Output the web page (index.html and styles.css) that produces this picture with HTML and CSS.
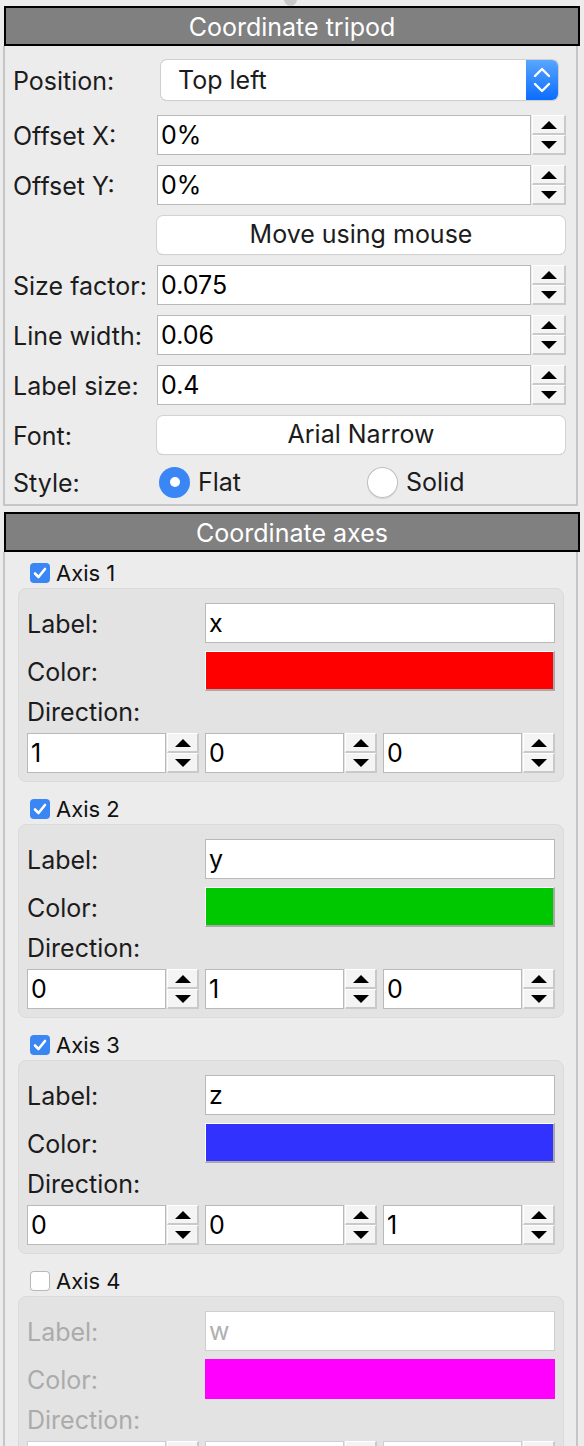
FILE: index.html
```html
<!DOCTYPE html>
<html>
<head>
<meta charset="utf-8">
<link rel="stylesheet" href="styles.css">
</head>
<body>
<div class="handle"></div>
<div class="panel">
  <div class="header">Coordinate tripod</div>
  <div class="frame tripod">
    <div class="form">
      <div class="lbl pos">Position:</div>
      <div class="combo"><span class="combo-text">Top left</span><span class="combo-btn"><svg width="20" height="30" viewBox="0 0 20 30"><polyline points="3,11 10,4 17,11" fill="none" stroke="#fff" stroke-width="2.4" stroke-linecap="round" stroke-linejoin="round"/><polyline points="3,19 10,26 17,19" fill="none" stroke="#fff" stroke-width="2.4" stroke-linecap="round" stroke-linejoin="round"/></svg></span></div>

      <div class="lbl">Offset X:</div>
      <div class="spin"><div class="inp">0%</div><div class="arrows"><div class="up"><i></i></div><div class="dn"><i></i></div></div></div>

      <div class="lbl">Offset Y:</div>
      <div class="spin"><div class="inp">0%</div><div class="arrows"><div class="up"><i></i></div><div class="dn"><i></i></div></div></div>

      <div></div>
      <div class="btn">Move using mouse</div>

      <div class="lbl">Size factor:</div>
      <div class="spin"><div class="inp">0.075</div><div class="arrows"><div class="up"><i></i></div><div class="dn"><i></i></div></div></div>

      <div class="lbl">Line width:</div>
      <div class="spin"><div class="inp">0.06</div><div class="arrows"><div class="up"><i></i></div><div class="dn"><i></i></div></div></div>

      <div class="lbl">Label size:</div>
      <div class="spin"><div class="inp">0.4</div><div class="arrows"><div class="up"><i></i></div><div class="dn"><i></i></div></div></div>

      <div class="lbl">Font:</div>
      <div class="btn">Arial Narrow</div>

      <div class="lbl">Style:</div>
      <div class="radios">
        <div class="radio-item first"><span class="radio on"></span>Flat</div>
        <div class="radio-item"><span class="radio"></span>Solid</div>
      </div>
    </div>
  </div>

  <div class="header">Coordinate axes</div>
  <div class="frame axes">
    <div class="axis">
      <div class="axis-title"><span class="check on"><svg width="14" height="12" viewBox="0 0 14 12"><polyline points="2,6.5 5.5,10 12,2" fill="none" stroke="#fff" stroke-width="2.6" stroke-linecap="round" stroke-linejoin="round"/></svg></span>Axis 1</div>
      <div class="axis-box">
        <div class="lbl">Label:</div><div class="inp wide">x</div>
        <div class="lbl">Color:</div><div class="swatch red"></div>
        <div class="lbl full">Direction:</div>
        <div class="spin"><div class="inp">1</div><div class="arrows"><div class="up"><i></i></div><div class="dn"><i></i></div></div></div>
        <div class="spin"><div class="inp">0</div><div class="arrows"><div class="up"><i></i></div><div class="dn"><i></i></div></div></div>
        <div class="spin"><div class="inp">0</div><div class="arrows"><div class="up"><i></i></div><div class="dn"><i></i></div></div></div>
      </div>
    </div>

    <div class="axis">
      <div class="axis-title"><span class="check on"><svg width="14" height="12" viewBox="0 0 14 12"><polyline points="2,6.5 5.5,10 12,2" fill="none" stroke="#fff" stroke-width="2.6" stroke-linecap="round" stroke-linejoin="round"/></svg></span>Axis 2</div>
      <div class="axis-box">
        <div class="lbl">Label:</div><div class="inp wide">y</div>
        <div class="lbl">Color:</div><div class="swatch green"></div>
        <div class="lbl full">Direction:</div>
        <div class="spin"><div class="inp">0</div><div class="arrows"><div class="up"><i></i></div><div class="dn"><i></i></div></div></div>
        <div class="spin"><div class="inp">1</div><div class="arrows"><div class="up"><i></i></div><div class="dn"><i></i></div></div></div>
        <div class="spin"><div class="inp">0</div><div class="arrows"><div class="up"><i></i></div><div class="dn"><i></i></div></div></div>
      </div>
    </div>

    <div class="axis">
      <div class="axis-title"><span class="check on"><svg width="14" height="12" viewBox="0 0 14 12"><polyline points="2,6.5 5.5,10 12,2" fill="none" stroke="#fff" stroke-width="2.6" stroke-linecap="round" stroke-linejoin="round"/></svg></span>Axis 3</div>
      <div class="axis-box">
        <div class="lbl">Label:</div><div class="inp wide">z</div>
        <div class="lbl">Color:</div><div class="swatch blue"></div>
        <div class="lbl full">Direction:</div>
        <div class="spin"><div class="inp">0</div><div class="arrows"><div class="up"><i></i></div><div class="dn"><i></i></div></div></div>
        <div class="spin"><div class="inp">0</div><div class="arrows"><div class="up"><i></i></div><div class="dn"><i></i></div></div></div>
        <div class="spin"><div class="inp">1</div><div class="arrows"><div class="up"><i></i></div><div class="dn"><i></i></div></div></div>
      </div>
    </div>

    <div class="axis disabled">
      <div class="axis-title"><span class="check"></span>Axis 4</div>
      <div class="axis-box">
        <div class="lbl">Label:</div><div class="inp wide">w</div>
        <div class="lbl">Color:</div><div class="swatch magenta"></div>
        <div class="lbl full">Direction:</div>
        <div class="spin"><div class="inp empty"></div><div class="arrows"><div class="up"><i></i></div><div class="dn"><i></i></div></div></div>
        <div class="spin"><div class="inp empty"></div><div class="arrows"><div class="up"><i></i></div><div class="dn"><i></i></div></div></div>
        <div class="spin"><div class="inp empty"></div><div class="arrows"><div class="up"><i></i></div><div class="dn"><i></i></div></div></div>
      </div>
    </div>
  </div>
</div>
</body>
</html>
```

FILE: styles.css
```css
* { box-sizing: border-box; }
html, body { margin: 0; padding: 0; }
body {
  background: #ececec;
  font-family: Inter, "Noto Sans", sans-serif;
  font-size: 25px;
  color: #1c1c1c;
  width: 584px;
  height: 1446px;
  overflow: hidden;
  position: relative;
}
.handle {
  position: absolute;
  left: 284px;
  top: -7px;
  width: 13px;
  height: 13px;
  border-radius: 50%;
  background: #c9c9c9;
}
.panel { padding-top: 6px; }
.header {
  margin: 0 4px 0 4px;
  height: 40px;
  background: #808080;
  border: 2px solid #000;
  color: #fff;
  text-align: center;
  line-height: 38px;
}
.frame {
  margin: 0 6px 0 3px;
  border-left: 2px solid #c6c6c6;
  border-right: 2px solid #c6c6c6;
}
.tripod {
  border-bottom: 2px solid #c6c6c6;
  padding: 14px 10px 5px 8px;
  margin-bottom: 6px;
}
.form {
  display: grid;
  grid-template-columns: 138px minmax(0, 1fr);
  column-gap: 6px;
  row-gap: 10px;
  align-items: center;
}
.lbl { line-height: 30px; white-space: nowrap; padding-top: 1px; }
.lbl.pos { margin-bottom: 5px; }
.combo {
  height: 40px;
  margin: 0 8px 5px 4px;
  background: #fff;
  border-radius: 6px;
  box-shadow: 0 0 0 1px #cfcfcf, 0 1px 1px rgba(0,0,0,0.15);
  display: flex;
  align-items: center;
  overflow: hidden;
}
.combo-text { flex: 1; padding-left: 17px; }
.combo-btn {
  width: 32px;
  height: 40px;
  background: linear-gradient(#58a6ff, #0b6cff);
  display: flex;
  align-items: center;
  justify-content: center;
}
.spin { display: flex; height: 40px; }
.inp {
  height: 40px;
  background: #fff;
  border: 1px solid #b9b9b9;
  padding-left: 3px;
  line-height: 38px;
  color: #000;
}
.spin .inp { flex: 1; min-width: 0; }
.arrows {
  width: 34px;
  margin-left: 1px;
  display: flex;
  flex-direction: column;
}
.arrows .up, .arrows .dn {
  flex: 1;
  background: #f4f4f4;
  border-top: 1px solid #fff;
  border-left: 1px solid #fff;
  border-right: 2px solid #c9c9c9;
  border-bottom: 2px solid #c9c9c9;
  display: flex;
  align-items: center;
  justify-content: center;
}
.arrows i {
  width: 0; height: 0;
  border-left: 8px solid transparent;
  border-right: 8px solid transparent;
}
.arrows .up i { border-bottom: 8px solid #000; }
.arrows .dn i { border-top: 8px solid #000; }
.btn {
  height: 38px;
  margin: 1px 1px 1px 0;
  background: #fff;
  border-radius: 6px;
  box-shadow: 0 0 0 1px #d2d2d2, 0 1px 1px rgba(0,0,0,0.18);
  text-align: center;
  line-height: 37px;
}
.radios {
  display: flex;
  height: 34px;
  align-items: center;
}
.radio-item { display: flex; align-items: center; }
.radio-item.first { width: 208px; flex: none; }
.radio {
  width: 31px; height: 31px;
  border-radius: 50%;
  margin-left: 2px;
  margin-right: 8px;
  background: #fff;
  box-shadow: inset 0 0 0 1px #bdbdbd, 0 1px 1px rgba(0,0,0,0.1);
  display: flex;
  align-items: center;
  justify-content: center;
}
.radio.on { background: #3a86f5; box-shadow: none; }
.radio.on::after {
  content: "";
  width: 10px; height: 10px;
  border-radius: 50%;
  background: #fff;
}
.axes { padding: 11px 12px 0 13px; height: 2000px; }
.axis { margin-bottom: 17px; }
.axis-title {
  display: flex;
  align-items: center;
  height: 20px;
  padding-left: 12px;
  font-size: 22px;
  color: #111;
}
.check {
  width: 20px; height: 20px;
  border-radius: 4px;
  margin-right: 6px;
  background: #fff;
  box-shadow: inset 0 0 0 1px #b8b8b8;
  display: flex;
  align-items: center;
  justify-content: center;
}
.check.on { background: #3a86f5; box-shadow: none; }
.axis-box {
  margin-top: 5px;
  background: #e3e3e3;
  border: 1px solid #dadada;
  border-radius: 8px;
  padding: 14px 8px 8px 8px;
  display: grid;
  grid-template-columns: 1fr 1fr 1fr;
  column-gap: 6px;
  row-gap: 8px;
  align-items: center;
}
.axis-box .wide { grid-column: 2 / 4; }
.axis-box .full { grid-column: 1 / 4; height: 26px; line-height: 26px; padding-top: 0; }
.axis-box .arrows { width: 32px; margin-left: 1px; }
.swatch {
  grid-column: 2 / 4;
  height: 40px;
  border-top: 1px solid #fff;
  border-left: 1px solid #fff;
  border-right: 2px solid #a9a9a9;
  border-bottom: 2px solid #a9a9a9;
}
.red { background: #ff0000; }
.green { background: #00c800; }
.blue { background: #3232ff; }
.magenta { background: #ff00ff; border-color: #ff00ff; }
.disabled .axis-box .lbl { color: #ababab; }
.disabled .inp { color: #b0b0b0; border-color: #cfcfcf; }
```
